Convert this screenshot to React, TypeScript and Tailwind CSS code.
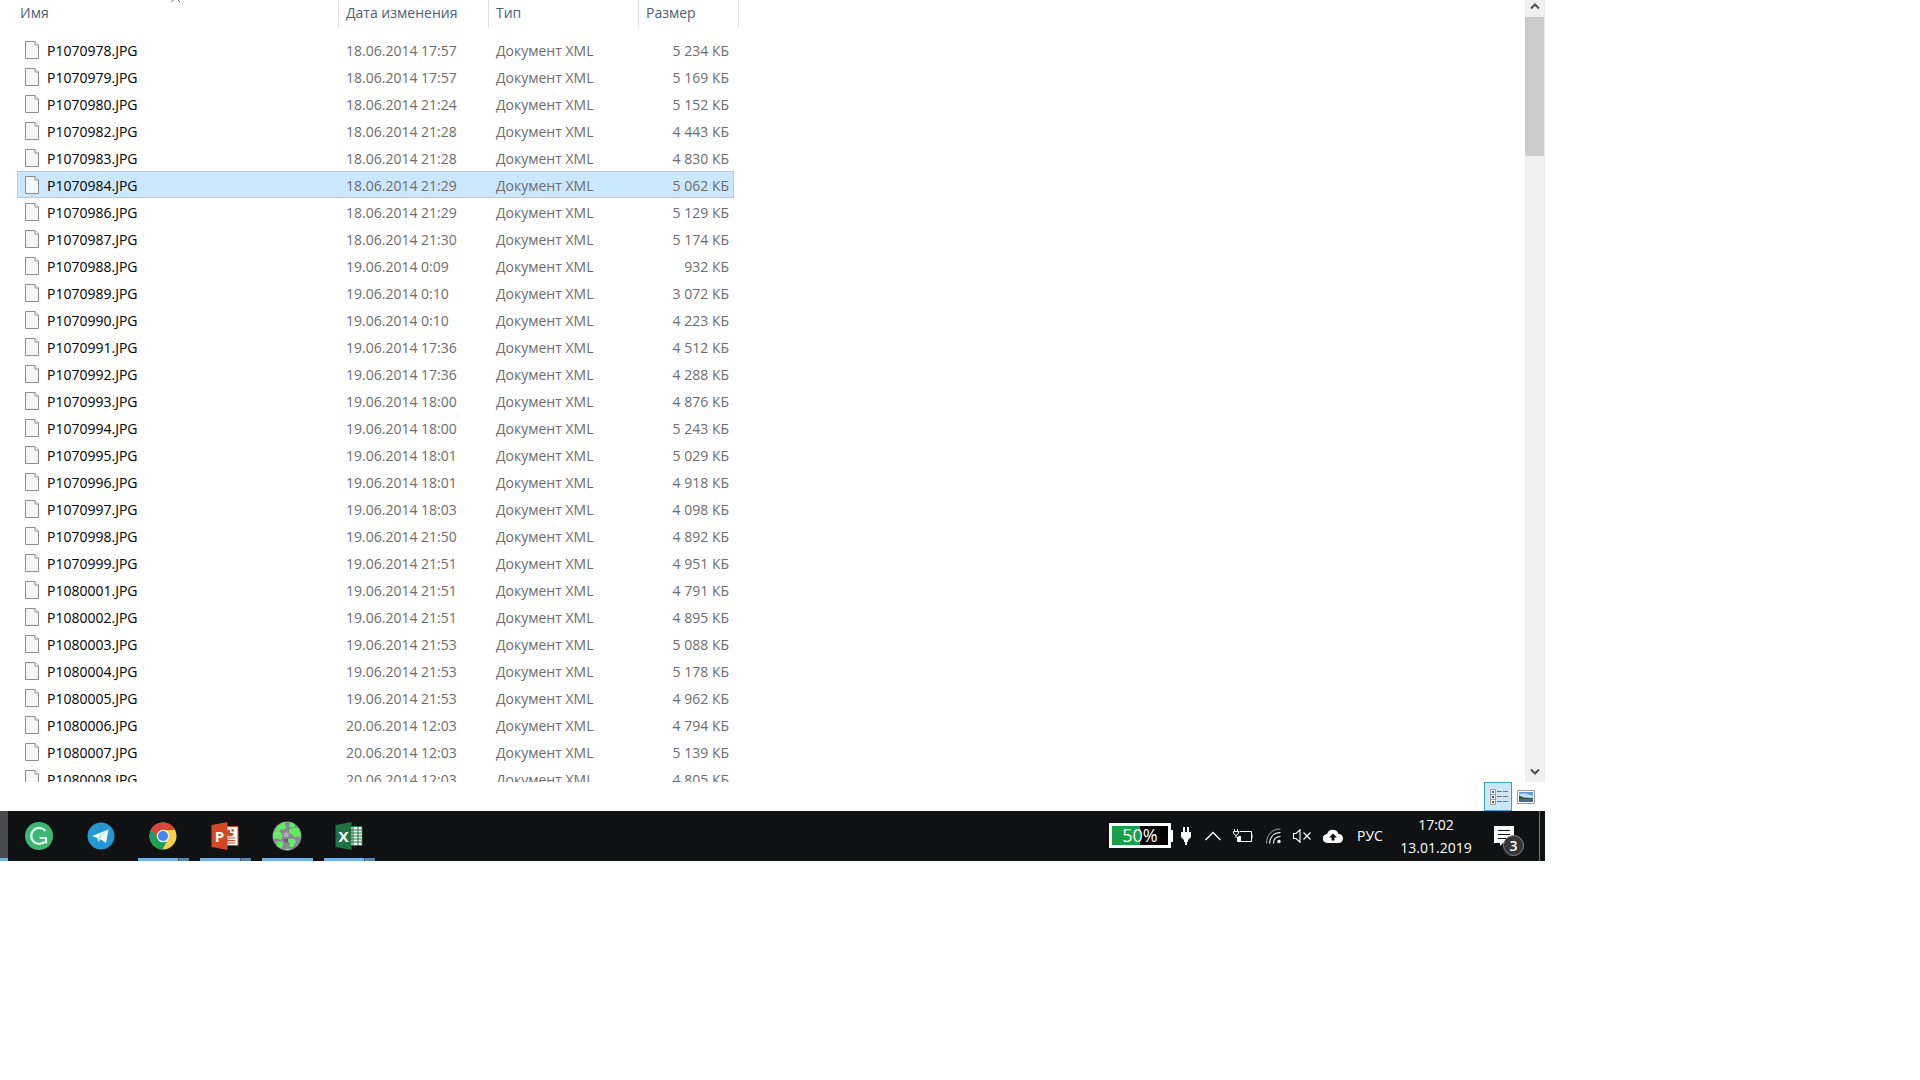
import { useState } from 'react'
import type { ReactNode } from 'react'

const files = [
  ['P1070978.JPG', '18.06.2014 17:57', '5 234 КБ'],
  ['P1070979.JPG', '18.06.2014 17:57', '5 169 КБ'],
  ['P1070980.JPG', '18.06.2014 21:24', '5 152 КБ'],
  ['P1070982.JPG', '18.06.2014 21:28', '4 443 КБ'],
  ['P1070983.JPG', '18.06.2014 21:28', '4 830 КБ'],
  ['P1070984.JPG', '18.06.2014 21:29', '5 062 КБ'],
  ['P1070986.JPG', '18.06.2014 21:29', '5 129 КБ'],
  ['P1070987.JPG', '18.06.2014 21:30', '5 174 КБ'],
  ['P1070988.JPG', '19.06.2014 0:09', '932 КБ'],
  ['P1070989.JPG', '19.06.2014 0:10', '3 072 КБ'],
  ['P1070990.JPG', '19.06.2014 0:10', '4 223 КБ'],
  ['P1070991.JPG', '19.06.2014 17:36', '4 512 КБ'],
  ['P1070992.JPG', '19.06.2014 17:36', '4 288 КБ'],
  ['P1070993.JPG', '19.06.2014 18:00', '4 876 КБ'],
  ['P1070994.JPG', '19.06.2014 18:00', '5 243 КБ'],
  ['P1070995.JPG', '19.06.2014 18:01', '5 029 КБ'],
  ['P1070996.JPG', '19.06.2014 18:01', '4 918 КБ'],
  ['P1070997.JPG', '19.06.2014 18:03', '4 098 КБ'],
  ['P1070998.JPG', '19.06.2014 21:50', '4 892 КБ'],
  ['P1070999.JPG', '19.06.2014 21:51', '4 951 КБ'],
  ['P1080001.JPG', '19.06.2014 21:51', '4 791 КБ'],
  ['P1080002.JPG', '19.06.2014 21:51', '4 895 КБ'],
  ['P1080003.JPG', '19.06.2014 21:53', '5 088 КБ'],
  ['P1080004.JPG', '19.06.2014 21:53', '5 178 КБ'],
  ['P1080005.JPG', '19.06.2014 21:53', '4 962 КБ'],
  ['P1080006.JPG', '20.06.2014 12:03', '4 794 КБ'],
  ['P1080007.JPG', '20.06.2014 12:03', '5 139 КБ'],
  ['P1080008.JPG', '20.06.2014 12:03', '4 805 КБ'],
]

function FileIcon() {
  return (
    <svg width="14" height="18" viewBox="0 0 14 18" fill="none" className="mb-[2px] shrink-0">
      <path d="M.5 .5H10L13.5 4V17.5H.5Z" fill="#f7f7f8" stroke="#8c8c8c" />
      <path d="M10 .5V4H13.5" fill="#fff" stroke="#8c8c8c" />
    </svg>
  )
}

function FileTable() {
  const [selected, setSelected] = useState('P1070984.JPG')

  return (
    <table className="ml-[17px] w-[717px] table-fixed border-collapse text-left">
      <colgroup>
        <col className="w-[322px]" />
        <col className="w-[150px]" />
        <col className="w-[150px]" />
        <col />
      </colgroup>
      <thead>
        <tr className="h-9 align-top text-[#4c607a]">
          <th className="p-0 font-normal">
            <div className="relative h-7 border-r border-[#e2e2e2] pl-[3px] leading-[26px]">
              Имя
              {/* sort direction mark */}
              <svg width="10" height="2" viewBox="0 0 10 2" className="absolute left-[154px] top-0" fill="none" stroke="#666">
                <path d="M.5 2L2.5 0M9 2L7 0" />
              </svg>
            </div>
          </th>
          <th className="p-0 font-normal">
            <div className="h-7 border-r border-[#e2e2e2] pl-[7px] leading-[26px]">Дата изменения</div>
          </th>
          <th className="p-0 font-normal">
            <div className="h-7 border-r border-[#e2e2e2] pl-[7px] leading-[26px]">Тип</div>
          </th>
          <th className="p-0 font-normal">
            <div className="-mr-[5px] h-7 border-r border-[#e2e2e2] pl-[7px] leading-[26px]">Размер</div>
          </th>
        </tr>
      </thead>
      <tbody>
        {files.map(([name, date, size]) => (
          <tr
            key={name}
            onClick={() => setSelected(name)}
            className={
              name === selected
                ? 'h-[27px] bg-[#cce8ff] text-[#6d6d6d] outline outline-1 -outline-offset-1 outline-[#99d1ff]'
                : 'h-[27px] text-[#6d6d6d]'
            }
          >
            <td className="p-0 pt-[2px]">
              <div className="flex items-center gap-2 pl-2 text-black">
                <FileIcon />
                {name}
              </div>
            </td>
            <td className="p-0 pl-[7px] pt-[2px]">{date}</td>
            <td className="p-0 pl-[7px] pt-[2px]">Документ XML</td>
            <td className="p-0 pr-[5px] pt-[2px] text-right">{size}</td>
          </tr>
        ))}
      </tbody>
    </table>
  )
}

function Scrollbar() {
  return (
    <div className="flex w-5 shrink-0 flex-col bg-[#efefef]">
      <button aria-label="Вверх" className="flex h-[17px] items-start justify-center pt-[2px]">
        <svg width="10" height="8" viewBox="0 0 10 8" fill="none" stroke="#505050" strokeWidth="2">
          <path d="M1 6.5L5 2.5L9 6.5" />
        </svg>
      </button>
      <div className="mr-px h-[139px] bg-[#cbcbcb]" />
      <button aria-label="Вниз" className="mt-auto flex h-[17px] items-start justify-center pt-[3px]">
        <svg width="10" height="8" viewBox="0 0 10 8" fill="none" stroke="#505050" strokeWidth="2">
          <path d="M1 1.5L5 5.5L9 1.5" />
        </svg>
      </button>
    </div>
  )
}

function StatusBar() {
  return (
    <div className="flex h-[29px] items-stretch justify-end pr-[10px]">
      <button aria-label="Таблица" className="flex w-7 items-center justify-end border border-[#3a9fc9] bg-[#cce8f6] pr-[3px]">
        <svg width="18" height="16" viewBox="0 0 18 16" fill="none">
          <path d="M.5 .5H5.5V15.5H.5ZM.5 5.5H5.5M.5 10.5H5.5" fill="#fff" stroke="#9b9b9b" />
          <path d="M2 2H4V4H2Z" fill="#3d5c87" />
          <path d="M2 7H4V9H2Z" fill="#37475c" />
          <path d="M2 12H4V14H2Z" fill="#9c3b2b" />
          <path d="M7 2.500H12M13 2.500H18M7 7.500H12M13 7.500H18M7 12.500H12M13 12.500H18" stroke="#777" />
        </svg>
      </button>
      <button aria-label="Эскизы" className="ml-[5px] flex items-center">
        <svg width="18" height="14" viewBox="0 0 18 14">
          <path d="M.5 .5H17.5V13.5H.5Z" fill="#fff" stroke="#9b9b9b" />
          <path d="M2 2H16V12H2Z" fill="#5b9bd5" />
          <path d="M4 3.500H9L16 6V8H2V5Z" fill="#c4e3f5" />
          <path d="M2 5.500L7 7.500L16 8V9.500H2Z" fill="#2e5546" />
          <path d="M2 9.500H16V12H2Z" fill="#3e6c95" />
        </svg>
      </button>
    </div>
  )
}

function GrammarlyIcon() {
  return (
    <svg width="28" height="28" viewBox="0 0 28 28">
      <circle cx="14" cy="14" r="14" fill="#3bb673" />
      <path d="M20.500 9A8 8 0 1 0 20 19.500M14.500 16H21V21.500" fill="none" stroke="#e4f6ec" strokeWidth="2.200" />
    </svg>
  )
}

function TelegramIcon() {
  return (
    <svg width="28" height="28" viewBox="0 0 28 28">
      <circle cx="14" cy="14" r="13.500" fill="#2597d3" />
      <path d="M5 14L21.500 7.500L19 21L13.500 17.200L11.200 20L10.500 16Z" fill="#f4f9fc" />
      <path d="M10.500 16L19 9.500L12.500 17L11.200 20Z" fill="#b9d5e6" />
    </svg>
  )
}

function ChromeIcon() {
  return (
    <svg width="28" height="28" viewBox="0 0 28 28">
      <circle cx="14" cy="14" r="13.500" fill="#fcd04b" />
      <path d="M14 14L8.500 17.200L2.300 7.250A13.500 13.500 0 0 1 26 8H14Z" fill="#db4437" />
      <path d="M2.300 7.250L8.800 17L14 20H17.500L13.500 27.500A13.500 13.500 0 0 1 2.300 7.250Z" fill="#1b9f5a" />
      <circle cx="14" cy="14" r="6.300" fill="#f1f1f1" />
      <circle cx="14" cy="14" r="5" fill="#4285f4" />
    </svg>
  )
}

function PowerPointIcon() {
  return (
    <svg width="28" height="28" viewBox="0 0 28 28">
      <path d="M14 4.500H27V23.500H14Z" fill="#fff" stroke="#d24726" />
      <path d="M16 16H24M16 18.500H24M16 21H24" stroke="#d24726" strokeWidth="1.200" />
      <path d="M19 7.500A3.500 3.500 0 1 0 22.500 11H19Z" fill="#d24726" />
      <path d="M20.500 6.500A3.500 3.500 0 0 1 23.500 9.500H20.500Z" fill="#d24726" />
      <path d="M.5 3L16.500 0V28L.5 25Z" fill="#d24726" />
      <text x="8.500" y="19.500" textAnchor="middle" fontSize="15" fontWeight="700" fill="#fff">P</text>
    </svg>
  )
}

function GlobeIcon() {
  return (
    <svg width="30" height="30" viewBox="0 0 30 30">
      <circle cx="15" cy="15" r="14.500" fill="#8d8496" />
      <path d="M6 4.500L11 1.500L14 1L12.500 4L14.500 6L12 9L9 8L6.500 11L3 9Z" fill="#5fee60" />
      <path d="M16 .8L22 2.300L23 5.500L19 7L17 5L18 3Z" fill="#5fee60" />
      <path d="M1 12L4 9.500L8 11L11 14.500L8.500 19L6 17L1.500 18Z" fill="#5fee60" />
      <path d="M17 8.500L22 7L26 7L28.500 11.500L28.500 17L25 15L23 16.500L20 13.500L17.500 12.500Z" fill="#5fee60" />
      <path d="M16.500 17.500L22 17.500L24 21L20.500 26H18L17.500 22L16 20Z" fill="#5fee60" />
      <path d="M4 20.500L10 20.500L11.500 23L9.500 27.500L5.500 25.500Z" fill="#5fee60" />
      <path d="M12 28L17 27.500L19 28.500L15 29.500Z" fill="#5fee60" />
      <path d="M12 11.500H16.500V16H12Z" fill="#b3aabb" />
      <path d="M12 18H16V21.500H12.500Z" fill="#675d75" />
    </svg>
  )
}

function ExcelIcon() {
  return (
    <svg width="28" height="28" viewBox="0 0 28 28">
      <path d="M14 4.500H27V23.500H14Z" fill="#fff" stroke="#1f7244" />
      <path d="M18 5V23M23 5V23" stroke="#1f7244" />
      <path d="M16 8H26M16 11H26M16 14H26M16 17H26M16 20H26" stroke="#1f7244" />
      <path d="M.5 3L16.500 0V28L.5 25Z" fill="#1f7244" />
      <text x="8.500" y="19.500" textAnchor="middle" fontSize="15" fontWeight="700" fill="#fff">X</text>
    </svg>
  )
}

type TaskProps = {
  label: string
  state?: 'closed' | 'single' | 'stacked'
  children: ReactNode
}

function TaskButton({ label, state = 'closed', children }: TaskProps) {
  return (
    <button aria-label={label} className="relative flex w-[62px] items-center justify-center">
      {children}
      {state !== 'closed' && (
        <span className="absolute bottom-0 left-[6px] flex h-[3px] w-[51px] bg-[#76b1e3]">
          {state === 'stacked' && <span className="ml-auto w-[11px] border-l border-[#3a5a75] bg-[#5a86ab]" />}
        </span>
      )}
    </button>
  )
}

function Tray() {
  return (
    <div className="ml-auto flex items-center text-white">
      <div className="mb-px flex items-center" title="50%">
        <div className="flex h-[25px] w-[62px] items-center justify-center border-3 border-white bg-linear-to-r from-[#17a04c] from-50% to-black to-50% pb-px text-lg leading-none">
          50%
        </div>
        <div className="h-3 w-[2px] bg-white" />
      </div>
      <svg width="10" height="18" viewBox="0 0 10 18" className="ml-2" fill="#fff">
        <path d="M2 0H4V5H6V0H8V5H10V10L7 13V15H6V18H4V15H3V13L0 10V5H2Z" />
      </svg>
      <button aria-label="Скрытые значки" className="ml-[14px]">
        <svg width="16" height="10" viewBox="0 0 16 10" fill="none" stroke="#fff" strokeWidth="1.300">
          <path d="M.5 9L8 1.500L15.500 9" />
        </svg>
      </button>
      <svg width="20" height="14" viewBox="0 0 20 14" className="ml-3" fill="none" stroke="#fff">
        <path d="M6.500 2.500H18.500V12.500H4.500V8" />
        <path d="M5 7H8V12H5Z" fill="#fff" stroke="none" />
        <path d="M19 5.500V9.500M1.500 0V2M4.500 0V2M.5 2.500H5.500V4.500L3 6.500L.5 4.500ZM3 6V9" />
      </svg>
      <svg width="17" height="16" viewBox="0 0 17 16" className="ml-3" fill="none" stroke="#fff">
        <path d="M1.500 15.500C1.500 7 7 1 15.500 1" stroke="#aaa" />
        <path d="M4.500 15.500C5 9 9 4.500 15.500 4.500" strokeWidth="1.200" />
        <path d="M8.500 15.500C8.500 11 11 8.500 15.500 8.500" strokeWidth="1.200" />
        <circle cx="14" cy="13.500" r="1.700" fill="#fff" stroke="none" />
      </svg>
      <svg width="18" height="14" viewBox="0 0 18 14" className="ml-[11px]" fill="none" stroke="#fff" strokeWidth="1.100">
        <path d="M.5 4.500H3L7 .8V13.200L3 9.500H.5Z" />
        <path d="M10.500 3.500L17.500 10.500M17.500 3.500L10.500 10.500" />
      </svg>
      <svg width="20" height="14" viewBox="0 0 20 14" className="ml-3">
        <path d="M4.500 14A4.500 4.500 0 0 1 4 5A6 6 0 0 1 15.500 5A4.500 4.500 0 0 1 15.500 14Z" fill="#fff" />
        <path d="M10 4.500L14 8.500H11.500V11.500H8.500V8.500H6Z" fill="#111" />
      </svg>
      <button className="ml-[14px] w-[26px] text-sm">РУС</button>
      <div className="ml-[14px] w-[78px] text-center text-sm leading-[23px]">
        <div>17:02</div>
        <div>13.01.2019</div>
      </div>
      <button aria-label="Уведомления" className="relative ml-[19px] h-5 w-5">
        <svg width="20" height="20" viewBox="0 0 20 20">
          <path d="M0 0H20V17H9L6 20V17H0Z" fill="#fff" />
          <path d="M4 4.500H16M4 8.500H16M4 12.500H16" stroke="#111" />
        </svg>
        <span className="absolute left-[9px] top-[9px] flex h-[21px] w-[21px] items-center justify-center rounded-full border border-[#8a8a8a] bg-[#353535] text-sm font-semibold leading-none">
          3
        </span>
      </button>
      <button aria-label="Свернуть все окна" className="ml-[25px] h-[50px] w-[6px] border-l border-[#777]" />
    </div>
  )
}

export default function App() {
  return (
    <div className="min-h-screen bg-white pr-[375px] font-['Open_Sans','Noto_Sans',sans-serif] text-sm">
      <div className="flex h-[782px]">
        <div className="min-w-0 flex-1 overflow-hidden">
          <FileTable />
        </div>
        <Scrollbar />
      </div>
      <StatusBar />
      <div className="flex h-[50px] bg-[#101112]">
        <div className="w-2 border-b-3 border-[#76b1e3] bg-[#4a4a4c]" />
        <TaskButton label="Grammarly"><GrammarlyIcon /></TaskButton>
        <TaskButton label="Telegram"><TelegramIcon /></TaskButton>
        <TaskButton label="Chrome" state="stacked"><ChromeIcon /></TaskButton>
        <TaskButton label="PowerPoint" state="stacked"><PowerPointIcon /></TaskButton>
        <TaskButton label="Браузер" state="single"><GlobeIcon /></TaskButton>
        <TaskButton label="Excel" state="stacked"><ExcelIcon /></TaskButton>
        <Tray />
      </div>
    </div>
  )
}
